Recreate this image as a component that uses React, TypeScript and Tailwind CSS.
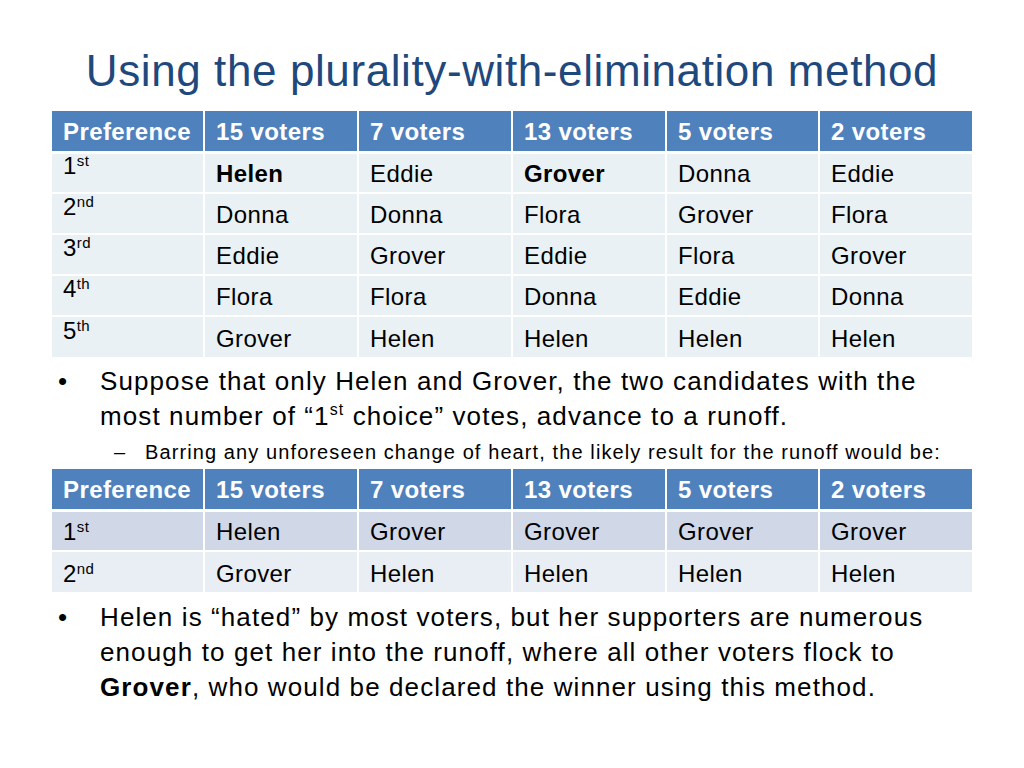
const headers = ["Preference", "15 voters", "7 voters", "13 voters", "5 voters", "2 voters"]

const ranks = [
  { n: "1", sup: "st" },
  { n: "2", sup: "nd" },
  { n: "3", sup: "rd" },
  { n: "4", sup: "th" },
  { n: "5", sup: "th" },
]

const firstTable = [
  ["Helen", "Eddie", "Grover", "Donna", "Eddie"],
  ["Donna", "Donna", "Flora", "Grover", "Flora"],
  ["Eddie", "Grover", "Eddie", "Flora", "Grover"],
  ["Flora", "Flora", "Donna", "Eddie", "Donna"],
  ["Grover", "Helen", "Helen", "Helen", "Helen"],
]

const runoffTable = [
  ["Helen", "Grover", "Grover", "Grover", "Grover"],
  ["Grover", "Helen", "Helen", "Helen", "Helen"],
]

const colWidths = ["w-[152px]", "w-[154px]", "w-[154px]", "w-[154px]", "w-[153px]", "w-[153px]"]

function HeaderRow() {
  return (
    <tr className="bg-[#4f81bd] text-white font-bold">
      {headers.map((h, i) => (
        <th
          key={h}
          className={`${colWidths[i]} h-[41px] border-l-2 border-white first:border-l-0 border-b-[3px] pl-[11px] pt-[3px] text-left font-bold`}
        >
          {h}
        </th>
      ))}
    </tr>
  )
}

function Rank({ n, sup, raised }: { n: string; sup: string; raised?: boolean }) {
  return (
    <span className={raised ? "relative -top-[8px]" : ""}>
      {n}
      <sup className="text-[15px] relative -top-[8px]">{sup}</sup>
    </span>
  )
}

function PreferenceTable({
  rows,
  rowColors,
  boldFirst,
  raisedRanks,
}: {
  rows: string[][]
  rowColors: string[]
  boldFirst?: number[]
  raisedRanks?: boolean
}) {
  return (
    <table className="table-fixed border-collapse w-[920px] text-[24px] leading-none tracking-[0.4px]">
      <thead>
        <HeaderRow />
      </thead>
      <tbody>
        {rows.map((row, r) => (
          <tr key={r} className={rowColors[r]}>
            <td className="h-[41px] border-t-2 border-white pl-[11px] pt-[3px]">
              <Rank {...ranks[r]} raised={raisedRanks} />
            </td>
            {row.map((cell, c) => (
              <td
                key={c}
                className={`h-[41px] border-t-2 border-l-2 border-white pl-[11px] pt-[3px] ${
                  r === 0 && boldFirst?.includes(c) ? "font-bold" : ""
                }`}
              >
                {cell}
              </td>
            ))}
          </tr>
        ))}
      </tbody>
    </table>
  )
}

export default function App() {
  return (
    <main className="w-[1024px] h-[768px] bg-white text-black font-['Liberation_Sans',Arial,sans-serif] overflow-hidden">
      <h1 className="pt-[49px] text-center text-[44px] leading-[44px] tracking-[0.6px] text-[#1f497d] mb-[18px]">
        Using the plurality-with-elimination method
      </h1>

      <div className="pl-[52px]">
        <PreferenceTable
          rows={firstTable}
          rowColors={["bg-[#e9f1f5]", "bg-[#e9f1f5]", "bg-[#e9f1f5]", "bg-[#e9f1f5]", "bg-[#e9f1f5]"]}
          boldFirst={[0, 2]}
          raisedRanks
        />

        <div className="mt-[7px] flex text-[26px] leading-[35px] tracking-[1.1px]">
          <span className="w-[48px] pl-[6px] tracking-normal">•</span>
          <p>
            Suppose that only Helen and Grover, the two candidates with the
            <br />
            most number of “1<sup className="text-[16px] relative -top-[10px]">st</sup> choice” votes, advance to a runoff.
          </p>
        </div>
        <div className="mt-[5px] flex text-[20px] leading-[26px] tracking-[1.1px]">
          <span className="w-[93px] pl-[62px] tracking-normal">–</span>
          <p>Barring any unforeseen change of heart, the likely result for the runoff would be:</p>
        </div>

        <div className="mt-[4px]">
          <PreferenceTable rows={runoffTable} rowColors={["bg-[#d0d8e8]", "bg-[#e9edf4]"]} />
        </div>

        <div className="mt-[8px] flex text-[26px] leading-[35px] tracking-[1.1px]">
          <span className="w-[48px] pl-[6px] tracking-normal">•</span>
          <p>
            Helen is “hated” by most voters, but her supporters are numerous
            <br />
            enough to get her into the runoff, where all other voters flock to
            <br />
            <b>Grover</b>, who would be declared the winner using this method.
          </p>
        </div>
      </div>
    </main>
  )
}
